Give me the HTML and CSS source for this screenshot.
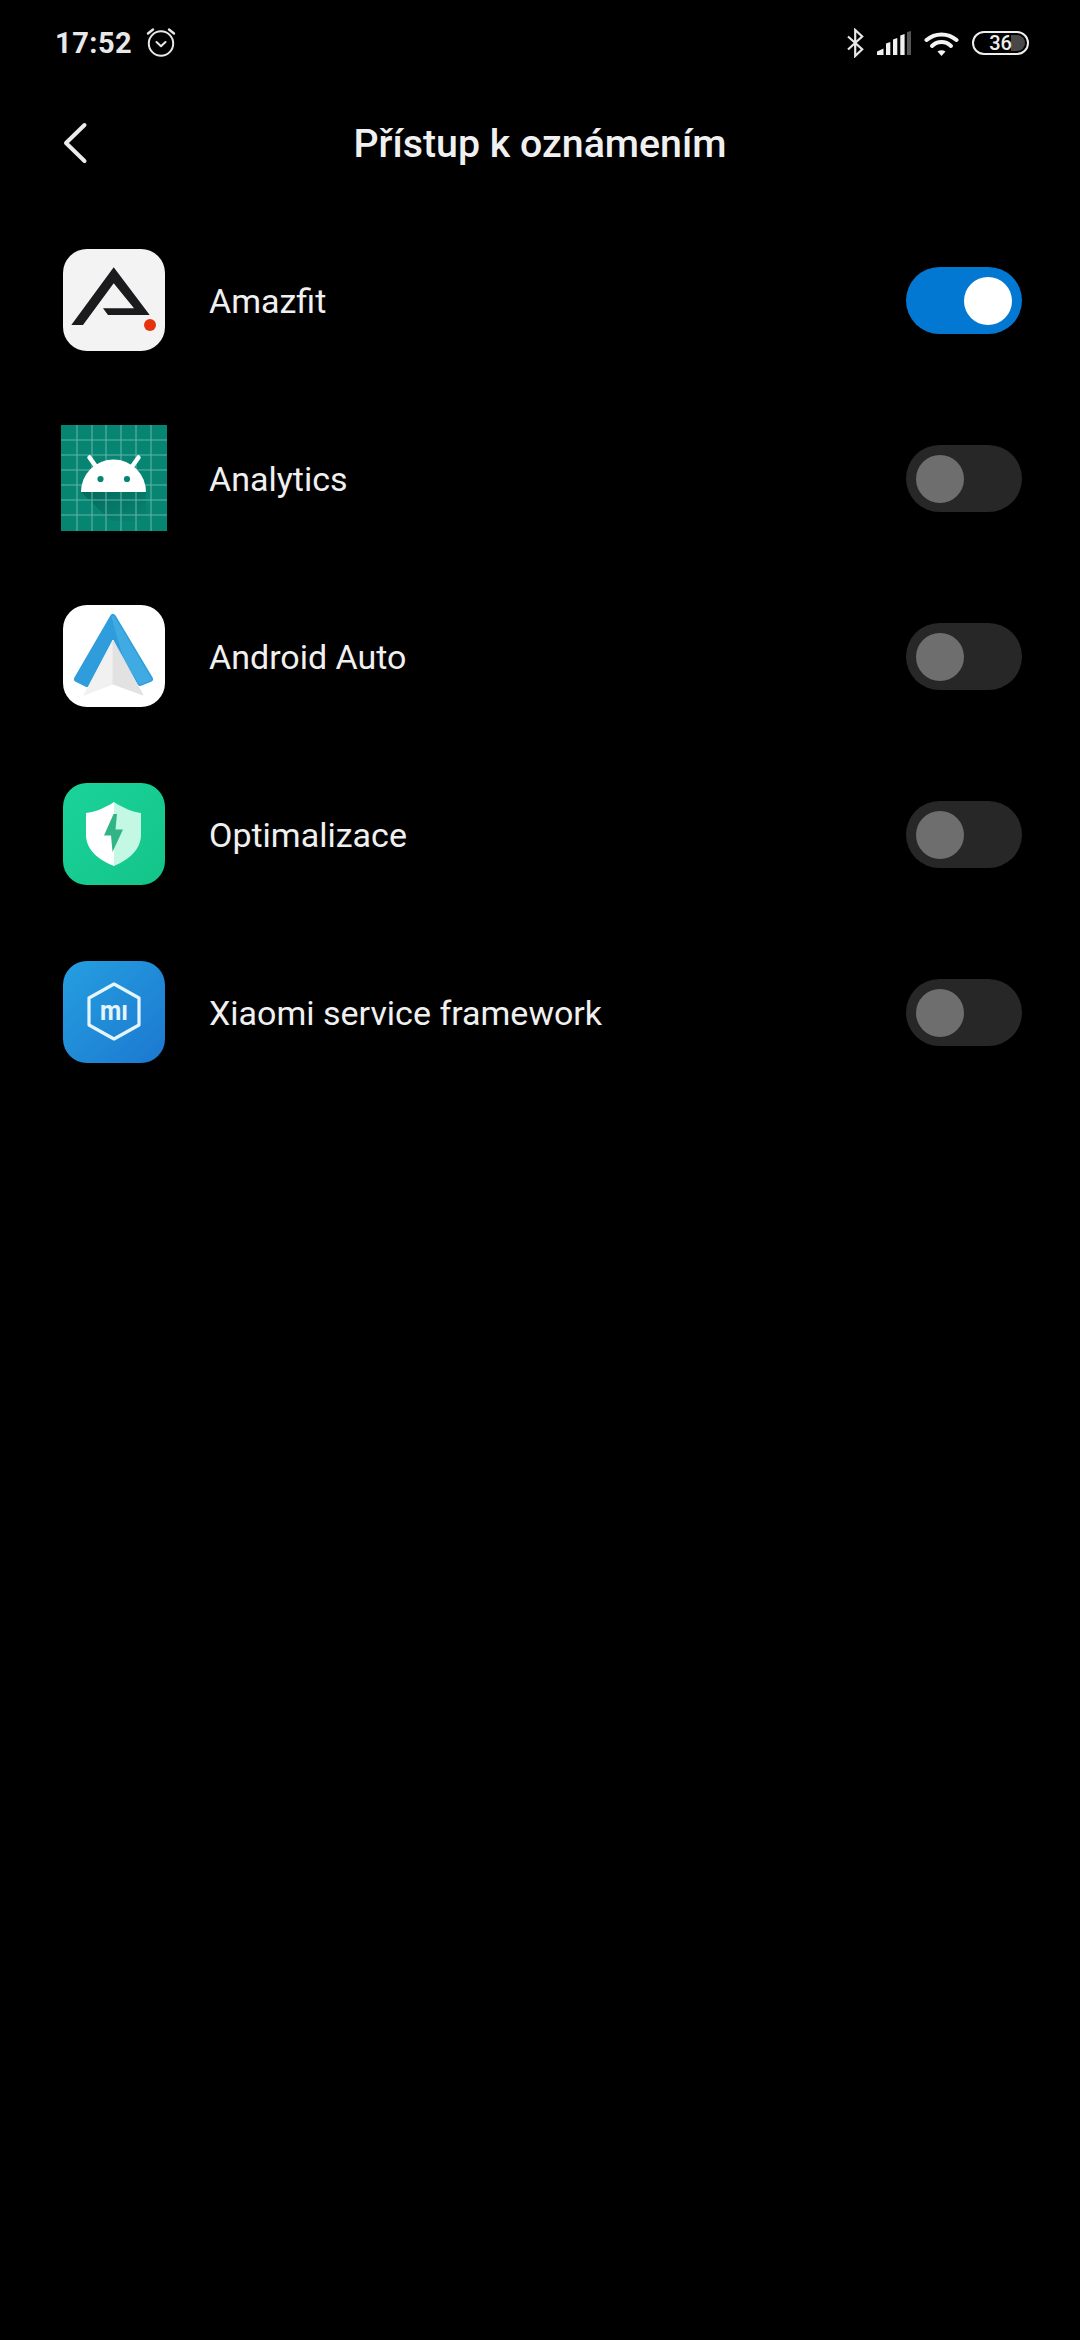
FILE: index.html
```html
<!DOCTYPE html>
<html lang="cs">

<head>
    <meta charset="UTF-8">
    <meta name="viewport" content="width=device-width, initial-scale=1.0">
    <title>Přístup k oznámením</title>
    <link rel="stylesheet" href="styles.css">
</head>

<body>
    <div class="status-bar">
        <div class="status-left">
            <span class="clock">17:52</span>
            <svg class="alarm" width="30" height="30" viewBox="0 0 30 30" fill="none" stroke="#e8e8e8">
                <circle cx="15" cy="16.500" r="12.200" stroke-width="2"/>
                <path d="M2 6.500 7 2.500M28 6.500 23 2.500" stroke-width="2.400" stroke-linecap="round"/>
                <path d="M10.500 15 15 19.200 19.500 15" stroke-width="2" stroke-linecap="round" stroke-linejoin="round"/>
            </svg>
        </div>
        <div class="status-right">
            <svg width="17" height="30" viewBox="0 0 17 30" fill="none" stroke="#e8e8e8" stroke-width="2.200">
                <path d="M1 8.500 15.200 21.300 8.200 28V2l7 6.500L1 21.500"/>
            </svg>
            <svg width="34" height="24" viewBox="0 0 34 24" fill="#f0f0f0">
                <path d="M0 24v-3.500L6.500 17.500V24zM9 24V12.500L13.300 11V24zM16 24V8.500L20.300 7V24zM23.300 24V4.500L27.600 3V24z"/>
                <path d="M30 24V1L34 0V24z" fill="#555"/>
            </svg>
            <svg width="35" height="25" viewBox="0 0 35 25" fill="none" stroke="#f4f4f4" stroke-width="4" stroke-linecap="round">
                <path d="M2.500 9C11 1.500 24 1.500 32.500 9"/>
                <path d="M8 15C13.500 9.800 21.500 9.800 27 15"/>
                <path d="M13.500 20.500 17.500 25 21.500 20.500C19 18.800 16 18.800 13.500 20.500z" fill="#f4f4f4" stroke="none"/>
            </svg>
            <div class="battery">
                <span class="battery-fill"></span>
                <span class="battery-level">36</span>
            </div>
        </div>
    </div>

    <header class="title-bar">
        <svg class="back" width="26" height="42" viewBox="0 0 26 42" fill="none" stroke="#ececec" stroke-width="4" stroke-linecap="round" stroke-linejoin="round">
            <path d="M22.500 3 4 21 22.500 39"/>
        </svg>
        <h1>Přístup k oznámením</h1>
    </header>

    <ul class="app-list">
        <li class="app-row">
            <div class="app-icon">
                <svg width="102" height="102" viewBox="0 0 102 102">
                    <rect width="102" height="102" rx="24" fill="#f4f3f3"/>
                    <path d="M50.700 18.300 86.700 66H45L40 59.300H71L50.700 34.300 20 76H8.300z" fill="#1b1b1d"/>
                    <circle cx="87" cy="76" r="6" fill="#e5330e"/>
                </svg>
            </div>
            <span class="app-name">Amazfit</span>
            <span class="switch on"><span class="knob"></span></span>
        </li>
        <li class="app-row">
            <div class="app-icon">
                <svg width="106" height="106" viewBox="0 0 106 106">
                    <defs>
                        <linearGradient id="robot-shadow" x1="0" y1="0" x2="1" y2="1">
                            <stop offset="0" stop-color="#05695b"/>
                            <stop offset="1" stop-color="#078573"/>
                        </linearGradient>
                    </defs>
                    <rect width="106" height="106" fill="#078573"/>
                    <path d="M20 67 50 96H85V67z" fill="url(#robot-shadow)"/>
                    <path d="M16 0V106M31 0V106M45 0V106M60 0V106M75 0V106M90 0V106M0 15H106M0 30H106M0 45H106M0 60H106M0 75H106M0 90H106" stroke="#5fb3a7" stroke-width="1.100"/>
                    <path d="M20 67A32.500 32.500 0 0 1 85 67z" fill="#fff"/>
                    <path d="M28.500 32.500 36 43M77.500 32.500 70 43" stroke="#fff" stroke-width="4.500" stroke-linecap="round"/>
                    <circle cx="39.500" cy="54" r="3.100" fill="#078573"/>
                    <circle cx="66" cy="54" r="3.100" fill="#078573"/>
                </svg>
            </div>
            <span class="app-name">Analytics</span>
            <span class="switch"><span class="knob"></span></span>
        </li>
        <li class="app-row">
            <div class="app-icon">
                <svg width="102" height="102" viewBox="0 0 102 102">
                    <rect width="102" height="102" rx="24" fill="#fff"/>
                    <path d="M50 12 87 74 77 78 50 36 24 79 14 74z" fill="#2f9cdc" stroke="#2f9cdc" stroke-width="6" stroke-linejoin="round"/>
                    <path d="M50 12 87 74 77 78 62 54z" fill="#40aae2" stroke="#40aae2" stroke-width="3" stroke-linejoin="round"/>
                    <path d="M50 35V79L21 90z" fill="#f1f1f2" stroke="#f1f1f2" stroke-linejoin="round"/>
                    <path d="M50 35V79L80 90z" fill="#e2e2e3" stroke="#e2e2e3" stroke-linejoin="round"/>
                </svg>
            </div>
            <span class="app-name">Android Auto</span>
            <span class="switch"><span class="knob"></span></span>
        </li>
        <li class="app-row">
            <div class="app-icon">
                <svg width="102" height="102" viewBox="0 0 102 102">
                    <defs>
                        <linearGradient id="shield-bg" x1="0" y1="0" x2="1" y2="1">
                            <stop offset="0" stop-color="#1ad39a"/>
                            <stop offset="1" stop-color="#14c488"/>
                        </linearGradient>
                    </defs>
                    <rect width="102" height="102" rx="24" fill="url(#shield-bg)"/>
                    <path d="M51 19C42 25 32 29 23 30V52C23 66 35 77 51 83z" fill="#fff"/>
                    <path d="M51 19C60 25 70 29 78 30V52C78 66 66 77 51 83z" fill="#c3f8e4"/>
                    <path d="M50.500 31 41 52.500H48L49.500 69 60 46.500H52.500L54 31z" fill="#32b585"/>
                </svg>
            </div>
            <span class="app-name">Optimalizace</span>
            <span class="switch"><span class="knob"></span></span>
        </li>
        <li class="app-row">
            <div class="app-icon">
                <svg width="102" height="102" viewBox="0 0 102 102">
                    <defs>
                        <linearGradient id="mi-bg" x1="0" y1="0" x2="1" y2="1">
                            <stop offset="0" stop-color="#259fe0"/>
                            <stop offset="1" stop-color="#1c78d0"/>
                        </linearGradient>
                    </defs>
                    <rect width="102" height="102" rx="24" fill="url(#mi-bg)"/>
                    <path d="M51 23 76 37V64L51 78 26 64V37z" fill="none" stroke="#e4f5fc" stroke-width="3.200" stroke-linejoin="round"/>
                    <text class="mi-mark" x="37" y="59" textLength="28" lengthAdjust="spacingAndGlyphs">mı</text>
                </svg>
            </div>
            <span class="app-name">Xiaomi service framework</span>
            <span class="switch"><span class="knob"></span></span>
        </li>
    </ul>
</body>

</html>
```

FILE: styles.css
```css
body {
    margin: 0;
    height: 2340px;
    background-color: #000;
    color: #f2f2f2;
    font-family: Roboto, "Noto Sans", sans-serif;
    overflow: hidden;
}

.status-bar {
    display: flex;
    justify-content: space-between;
    align-items: center;
    height: 86px;
    padding: 0 51px 0 55px;
}

.status-left {
    display: flex;
    align-items: center;
    gap: 14px;
}

.status-right {
    display: flex;
    align-items: center;
    gap: 13px;
}

.clock {
    font-size: 29px;
    font-weight: 700;
    letter-spacing: 0.5px;
    color: #e8e8e8;
}

.alarm {
    display: block;
    margin-top: -2px;
}

.battery {
    position: relative;
    display: flex;
    justify-content: center;
    align-items: center;
    box-sizing: border-box;
    width: 57px;
    height: 24px;
    border: 2.500px solid #eee;
    border-radius: 12px;
    overflow: hidden;
}

.battery-fill {
    position: absolute;
    top: 2px;
    right: 2px;
    bottom: 2px;
    width: 14px;
    background-color: #484848;
    border-radius: 0 8px 8px 0;
}

.battery-level {
    position: relative;
    font-size: 20px;
    font-weight: 500;
    line-height: 19px;
    color: #eee;
}

.title-bar {
    position: relative;
    display: flex;
    justify-content: center;
    align-items: center;
    height: 114px;
}

.back {
    position: absolute;
    left: 62px;
    top: 36px;
}

h1 {
    margin: 1px 0 0;
    font-size: 39.300px;
    font-weight: 500;
    color: #f0f0f0;
}

.app-list {
    list-style: none;
    margin: 11px 0 0;
    padding: 0 58px 0 61px;
}

.app-row {
    display: flex;
    align-items: center;
    height: 178px;
}

.app-icon {
    display: flex;
    justify-content: center;
    align-items: center;
    width: 106px;
    height: 106px;
}

.app-name {
    flex: 1;
    margin: 1px 0 0 42px;
    font-size: 34px;
    color: #f0f0f0;
}

.mi-mark {
    font-family: Roboto, sans-serif;
    font-size: 28px;
    font-weight: 700;
    fill: #e4f5fc;
}

.switch {
    display: flex;
    box-sizing: border-box;
    width: 116px;
    height: 67px;
    padding: 10px;
    background-color: #272727;
    border-radius: 34px;
}

.switch.on {
    justify-content: flex-end;
    background-color: #0378d3;
}

.knob {
    width: 48px;
    height: 48px;
    background-color: #6e6e6e;
    border-radius: 50%;
}

.switch.on .knob {
    background-color: #fff;
}
```
